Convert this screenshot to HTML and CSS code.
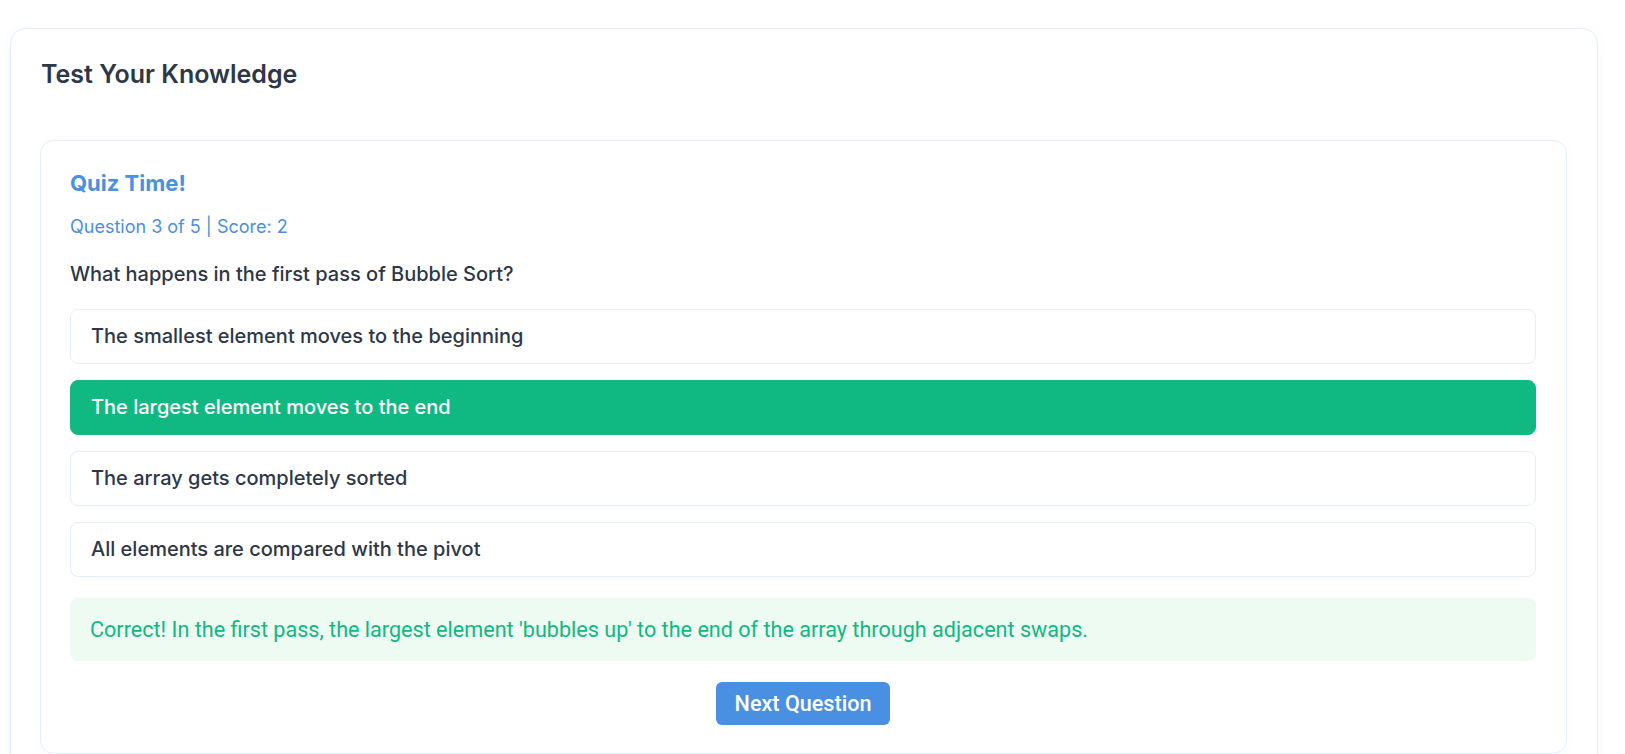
FILE: index.html
```html
<!DOCTYPE html>
<html lang="en">
<head>
<meta charset="utf-8">
<title>Test Your Knowledge</title>
<link rel="stylesheet" href="styles.css">
</head>
<body>
<section class="panel">
  <h2 class="panel-title">Test Your Knowledge</h2>
  <div class="quiz">
    <h3 class="quiz-title">Quiz Time!</h3>
    <p class="quiz-meta">Question 3 of 5 | Score: 2</p>
    <p class="quiz-question">What happens in the first pass of Bubble Sort?</p>
    <div class="options">
      <div class="option">The smallest element moves to the beginning</div>
      <div class="option option-correct">The largest element moves to the end</div>
      <div class="option">The array gets completely sorted</div>
      <div class="option">All elements are compared with the pivot</div>
    </div>
    <div class="feedback">Correct! In the first pass, the largest element 'bubbles up' to the end of the array through adjacent swaps.</div>
    <div class="actions">
      <button class="next-btn" type="button">Next Question</button>
    </div>
  </div>
</section>
</body>
</html>
```

FILE: styles.css
```css
* { box-sizing: border-box; }

html, body {
  margin: 0;
  padding: 0;
  background: #ffffff;
}

body {
  font-family: Inter, "Noto Sans", sans-serif;
  color: #2d3748;
  padding: 28px 27px 0 10px;
  overflow: hidden;
}

.panel {
  background: #ffffff;
  border: 1px solid #e6eefb;
  border-radius: 16px;
  box-shadow: 0 2px 12px rgba(74, 144, 226, 0.06);
  padding: 30px 30px 30px 29px;
}

.panel-title {
  margin: 0 0 51px 1px;
  font-size: 25px;
  font-weight: 600;
  line-height: 30px;
  color: #2d3748;
}

.quiz {
  border: 1px solid #e6eefb;
  border-radius: 14px;
  box-shadow: 0 2px 10px rgba(74, 144, 226, 0.05);
  padding: 29px 30px 28px 29px;
  background: #ffffff;
}

.quiz-title {
  margin: 0;
  font-size: 22px;
  font-weight: 700;
  line-height: 27px;
  color: #4a90e2;
}

.quiz-meta {
  margin: 19px 0 0 0;
  font-size: 18px;
  line-height: 22px;
  color: #4a90e2;
}

.quiz-question {
  margin: 24px 0 0 0;
  font-size: 20px;
  font-weight: 500;
  line-height: 24px;
  color: #2d3748;
}

.options {
  display: flex;
  flex-direction: column;
  gap: 16px;
  margin-top: 23px;
}

.option {
  border: 1px solid #e6eefb;
  border-radius: 8px;
  padding: 15px 20px;
  font-size: 20px;
  font-weight: 500;
  line-height: 23px;
  color: #2d3748;
  background: #ffffff;
}

.option-correct {
  background: #10b981;
  border-color: #10b981;
  color: #ffffff;
}

.feedback {
  margin-top: 21px;
  background: #edfbf3;
  border-radius: 8px;
  padding: 19px 20px;
  font-family: Roboto, "Liberation Sans", sans-serif;
  font-size: 21.6px;
  line-height: 25px;
  color: #10b981;
}

.actions {
  display: flex;
  justify-content: center;
  margin-top: 21px;
}

.next-btn {
  background: #4a90e2;
  color: #ffffff;
  border: none;
  border-radius: 6px;
  padding: 9px 19px;
  font-family: Roboto, "Liberation Sans", sans-serif;
  font-size: 21.6px;
  font-weight: 500;
  line-height: 25px;
  cursor: pointer;
}
```
